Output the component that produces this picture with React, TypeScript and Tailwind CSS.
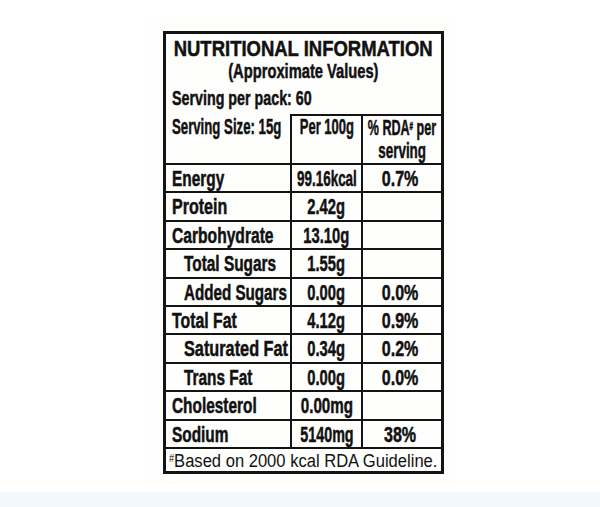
import type { ReactNode } from "react";

type Row = {
  name: string;
  per100: string;
  rda?: string;
  sub?: boolean;
  nameSx: string;
  valSx: string;
};

// the label uses a very condensed bold face, so every text is squeezed with scale-x
const ROWS: Row[] = [
  { name: "Energy", per100: "99.16kcal", rda: "0.7%", nameSx: "scale-x-[0.7]", valSx: "scale-x-[0.61]" },
  { name: "Protein", per100: "2.42g", nameSx: "scale-x-[0.73]", valSx: "scale-x-[0.67]" },
  { name: "Carbohydrate", per100: "13.10g", nameSx: "scale-x-[0.71]", valSx: "scale-x-[0.67]" },
  { name: "Total Sugars", per100: "1.55g", sub: true, nameSx: "scale-x-[0.7]", valSx: "scale-x-[0.67]" },
  { name: "Added Sugars", per100: "0.00g", rda: "0.0%", sub: true, nameSx: "scale-x-[0.69]", valSx: "scale-x-[0.67]" },
  { name: "Total Fat", per100: "4.12g", rda: "0.9%", nameSx: "scale-x-[0.72]", valSx: "scale-x-[0.67]" },
  { name: "Saturated Fat", per100: "0.34g", rda: "0.2%", sub: true, nameSx: "scale-x-[0.74]", valSx: "scale-x-[0.67]" },
  { name: "Trans Fat", per100: "0.00g", rda: "0.0%", sub: true, nameSx: "scale-x-[0.7]", valSx: "scale-x-[0.67]" },
  { name: "Cholesterol", per100: "0.00mg", nameSx: "scale-x-[0.7]", valSx: "scale-x-[0.69]" },
  { name: "Sodium", per100: "5140mg", rda: "38%", nameSx: "scale-x-[0.7]", valSx: "scale-x-[0.65]" },
];

function Sq({ children, className }: { children: ReactNode; className: string }) {
  return <span className={`inline-block whitespace-nowrap ${className}`}>{children}</span>;
}

export default function App() {
  return (
    <div className="flex h-[507px] w-[600px] flex-col bg-white text-[#111]">
      <div className="flex h-[492px] justify-center pt-[18px]">
        <div className="h-[465px] w-[304px] bg-[#fefefd] pl-[15px] pt-[13px]">
          <div className="w-[281px] border-[3px] border-[#141414] font-['Liberation_Sans',Arial,sans-serif] font-bold [-webkit-text-stroke:0.5px_#111]">
            {/* title block */}
            <div className="h-[80px]">
              <div className="flex h-[26px] justify-center text-[22px] leading-[30px]">
                <Sq className="origin-center scale-x-[0.84]">NUTRITIONAL INFORMATION</Sq>
              </div>
              <div className="flex h-[22px] justify-center text-[21px] leading-[22px]">
                <Sq className="origin-center scale-x-[0.7]">(Approximate Values)</Sq>
              </div>
              <div className="h-[32px] pl-[6px] text-[21px] leading-[32px]">
                <Sq className="origin-left scale-x-[0.68]">Serving per pack: 60</Sq>
              </div>
            </div>

            {/* column header */}
            <div className="grid h-[51px] grid-cols-[126px_71px_78px] border-b-2 border-[#141414] text-[22px] leading-[22px]">
              <div className="min-w-0 border-r-2 border-[#141414] pl-[6px] pt-[1.5px]">
                <Sq className="origin-left scale-x-[0.6]">Serving Size: 15g</Sq>
              </div>
              <div className="flex min-w-0 justify-center border-r-2 border-t-2 border-[#141414]">
                <Sq className="origin-center scale-x-[0.59]">Per 100g</Sq>
              </div>
              <div className="flex min-w-0 flex-col items-center border-t-2 border-[#141414] leading-[23px]">
                <Sq className="origin-center scale-x-[0.57]">
                  % RDA<sup className="text-[11px]">#</sup> per
                </Sq>
                <Sq className="origin-center scale-x-[0.61]">serving</Sq>
              </div>
            </div>

            {/* nutrient rows */}
            {ROWS.map((row) => (
              <div
                key={row.name}
                className="grid h-[28.4px] grid-cols-[126px_71px_78px] border-b-2 border-[#141414] text-[22px] leading-[28px]"
              >
                <div
                  className={`min-w-0 border-r-2 border-[#141414] ${
                    row.sub ? "pl-[18px]" : "pl-[6px]"
                  }`}
                >
                  <Sq className={`origin-left ${row.nameSx}`}>{row.name}</Sq>
                </div>
                <div className="flex min-w-0 justify-center border-r-2 border-[#141414]">
                  <Sq className={`origin-center ${row.valSx}`}>{row.per100}</Sq>
                </div>
                <div className="flex min-w-0 justify-center pr-[4px]">
                  {row.rda && (
                    <Sq className="origin-center scale-x-[0.73]">{row.rda}</Sq>
                  )}
                </div>
              </div>
            ))}

            {/* footnote */}
            <div className="h-[22px] pl-[3px] pt-[1px] text-[18px] font-normal leading-[22px] [-webkit-text-stroke:0px]">
              <Sq className="origin-left scale-x-[0.92]">
                <sup className="text-[10px]">#</sup>Based on 2000 kcal RDA Guideline.
              </Sq>
            </div>
          </div>
        </div>
      </div>
      <div className="h-[15px] bg-[#f3f8fd]" />
    </div>
  );
}
